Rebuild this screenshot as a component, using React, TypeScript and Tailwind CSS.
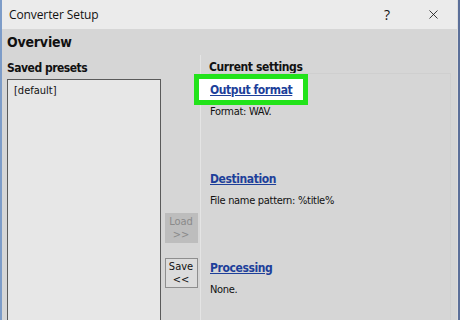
import { X } from "lucide-react";

const sections = [
  { title: "Output format", text: "Format: WAV.", highlight: true },
  { title: "Destination", text: "File name pattern: %title%", highlight: false },
  { title: "Processing", text: "None.", highlight: false },
];

const SettingSection = ({ title, text, highlight }: { title: string; text: string; highlight: boolean }) => (
  <div className="h-[89px]">
    <div
      className={
        highlight
          ? "-ml-[16px] w-[114px] h-[31px] border-[5px] border-[#22e31a] bg-white pl-[11px] flex items-center"
          : "h-[31px] flex items-center"
      }
    >
      <span className="text-[12px] font-bold text-[#1d3f9a] underline leading-none tracking-[-0.4px]">{title}</span>
    </div>
    <div className="text-[11px] text-[#111] leading-[14px] tracking-[-0.3px]">{text}</div>
  </div>
);

const App = () => {
  return (
    <div
      className="w-[460px] h-[320px] overflow-hidden flex bg-[#d6d6d6]"
      style={{ fontFamily: "Tahoma, 'DejaVu Sans Condensed', 'Liberation Sans', sans-serif" }}
    >
      <div className="w-[2px] bg-[#7d9cc8]" />
      <div className="flex-1 flex flex-col">
        {/* title bar */}
        <div className="h-[29px] shrink-0 bg-[#ebebeb] flex items-center pl-[7px] text-[#111]">
          <span className="text-[12px] tracking-[-0.1px]" style={{ fontFamily: "'Open Sans', 'Liberation Sans', sans-serif" }}>
            Converter Setup
          </span>
          <span className="ml-auto mr-[36px] text-[14px]" style={{ fontFamily: "'Open Sans', sans-serif" }}>?</span>
          <X className="mr-[16px] w-[15px] h-[15px]" strokeWidth={1.3} />
        </div>

        {/* overview header */}
        <div className="h-[26px] shrink-0 flex items-center pl-[5px]">
          <span className="text-[14px] font-bold text-[#111] tracking-[-0.2px]">Overview</span>
        </div>

        <div className="flex-1 flex">
          {/* saved presets */}
          <div className="flex flex-col pl-[5px] w-[159px] shrink-0">
            <div className="h-[24px] flex items-end pb-[2px] text-[12px] font-bold text-[#111] tracking-[-0.5px]">Saved presets</div>
            <div className="flex-1 bg-[#e7e7e7] border border-[#5a5a5a] pt-[3px] pl-[6px] text-[11px] text-[#111]">
              [default]
            </div>
          </div>

          {/* load / save */}
          <div className="w-[39px] shrink-0 flex flex-col items-center pt-[158px] gap-[15px] pl-[1px]">
            <div className="w-[33px] h-[30px] bg-[#bdbdbd] text-[#8a8a8a] text-[11px] leading-[13px] flex flex-col items-center justify-center">
              <span>Load</span>
              <span>&gt;&gt;</span>
            </div>
            <div className="w-[33px] h-[30px] bg-[#dcdcdc] border border-[#8e8e8e] text-[#111] text-[11px] leading-[13px] flex flex-col items-center justify-center">
              <span>Save</span>
              <span>&lt;&lt;</span>
            </div>
          </div>

          {/* current settings */}
          <div className="flex-1 flex flex-col border-l border-[#e4e4e4] pl-[8px]">
            <div className="h-[24px] flex items-center text-[12px] font-bold text-[#111] tracking-[-0.4px]">Current settings</div>
            <div className="flex-1 border-t border-r border-[#cfcfcf] mr-[6px] -mt-[6px] pl-[1px]">
              {sections.map((s) => (
                <SettingSection key={s.title} {...s} />
              ))}
            </div>
          </div>
        </div>
      </div>
      <div className="w-[1px] bg-[#dedede]" />
      <div className="w-[2px] bg-[#5b6f99]" />
    </div>
  );
};

export default App;
